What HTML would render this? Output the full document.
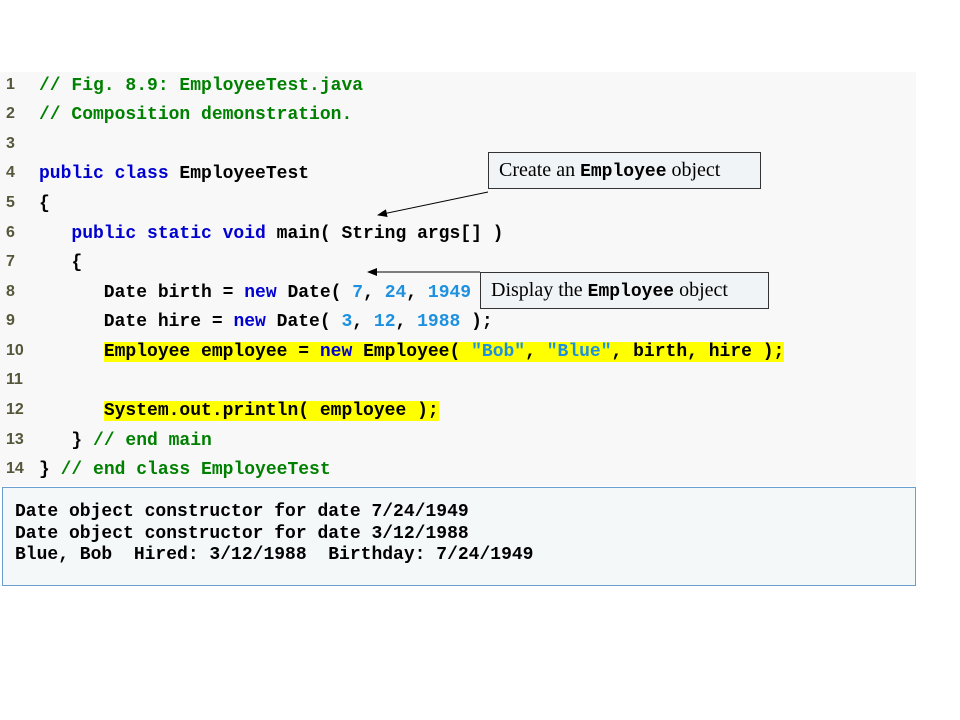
<!DOCTYPE html>
<html><head><meta charset="utf-8"><style>
body{margin:0;width:960px;height:720px;background:#fff;position:relative;overflow:hidden}
#code{position:absolute;left:0;top:72px;width:916px;height:414px;background:#f8f8f8}
.ln{position:absolute;left:6px;font:bold 16px "Liberation Sans",sans-serif;color:#56563a;width:26px}
.l{position:absolute;left:39px;font:bold 18px "Liberation Mono",monospace;white-space:pre;color:#000;line-height:22px}
.k{color:#0000d0}.c{color:#008000}.n{color:#1e90e0}
.h{background:#ffff00}
#out{position:absolute;left:2px;top:487px;width:912px;height:97px;background:#f4f8f8;border:1px solid #6a9fd0}
.o{position:absolute;left:15px;font:bold 18px "Liberation Mono",monospace;white-space:pre;color:#000}
.box{position:absolute;background:#f0f4f6;border:1px solid #333;font:20px "Liberation Serif",serif;color:#000;box-sizing:border-box;padding-left:10px;line-height:34px;white-space:nowrap}
.box b{font:bold 18px "Liberation Mono",monospace}
</style></head><body>
<div id="code"></div>
<div class="ln" style="top:76px">1</div><div class="l" style="top:75px"><span class="c">// Fig. 8.9: EmployeeTest.java</span></div>
<div class="ln" style="top:105px">2</div><div class="l" style="top:104px"><span class="c">// Composition demonstration.</span></div>
<div class="ln" style="top:135px">3</div>
<div class="ln" style="top:164px">4</div><div class="l" style="top:163px"><span class="k">public class</span> EmployeeTest</div>
<div class="ln" style="top:194px">5</div><div class="l" style="top:193px">{</div>
<div class="ln" style="top:224px">6</div><div class="l" style="top:223px">   <span class="k">public static void</span> main( String args[] )</div>
<div class="ln" style="top:253px">7</div><div class="l" style="top:252px">   {</div>
<div class="ln" style="top:283px">8</div><div class="l" style="top:282px">      Date birth = <span class="k">new</span> Date( <span class="n">7</span>, <span class="n">24</span>, <span class="n">1949</span> );</div>
<div class="ln" style="top:312px">9</div><div class="l" style="top:311px">      Date hire = <span class="k">new</span> Date( <span class="n">3</span>, <span class="n">12</span>, <span class="n">1988</span> );</div>
<div class="ln" style="top:342px">10</div><div class="l" style="top:341px">      <span class="h">Employee employee = <span class="k">new</span> Employee( <span class="n">"Bob"</span>, <span class="n">"Blue"</span>, birth, hire );</span></div>
<div class="ln" style="top:371px">11</div>
<div class="ln" style="top:401px">12</div><div class="l" style="top:400px">      <span class="h">System.out.println( employee );</span></div>
<div class="ln" style="top:431px">13</div><div class="l" style="top:430px">   } <span class="c">// end main</span></div>
<div class="ln" style="top:460px">14</div><div class="l" style="top:459px">} <span class="c">// end class EmployeeTest</span></div>
<div id="out"></div>
<div class="o" style="top:502px">Date object constructor for date 7/24/1949</div>
<div class="o" style="top:524px">Date object constructor for date 3/12/1988</div>
<div class="o" style="top:545px">Blue, Bob  Hired: 3/12/1988  Birthday: 7/24/1949</div>
<div class="box" style="left:488px;top:152px;width:273px;height:37px">Create an <b>Employee</b> object</div>
<div class="box" style="left:480px;top:272px;width:289px;height:37px">Display the <b>Employee</b> object</div>
<svg style="position:absolute;left:0;top:0" width="960" height="720">
<defs><marker id="a" markerWidth="10" markerHeight="8" refX="9" refY="4" orient="auto"><path d="M0,0 L10,4 L0,8 z" fill="#000"/></marker></defs>
<line x1="488" y1="192" x2="378" y2="215" stroke="#000" stroke-width="1" marker-end="url(#a)"/>
<line x1="480" y1="272" x2="368" y2="272" stroke="#000" stroke-width="1" marker-end="url(#a)"/>
</svg>
</body></html>
